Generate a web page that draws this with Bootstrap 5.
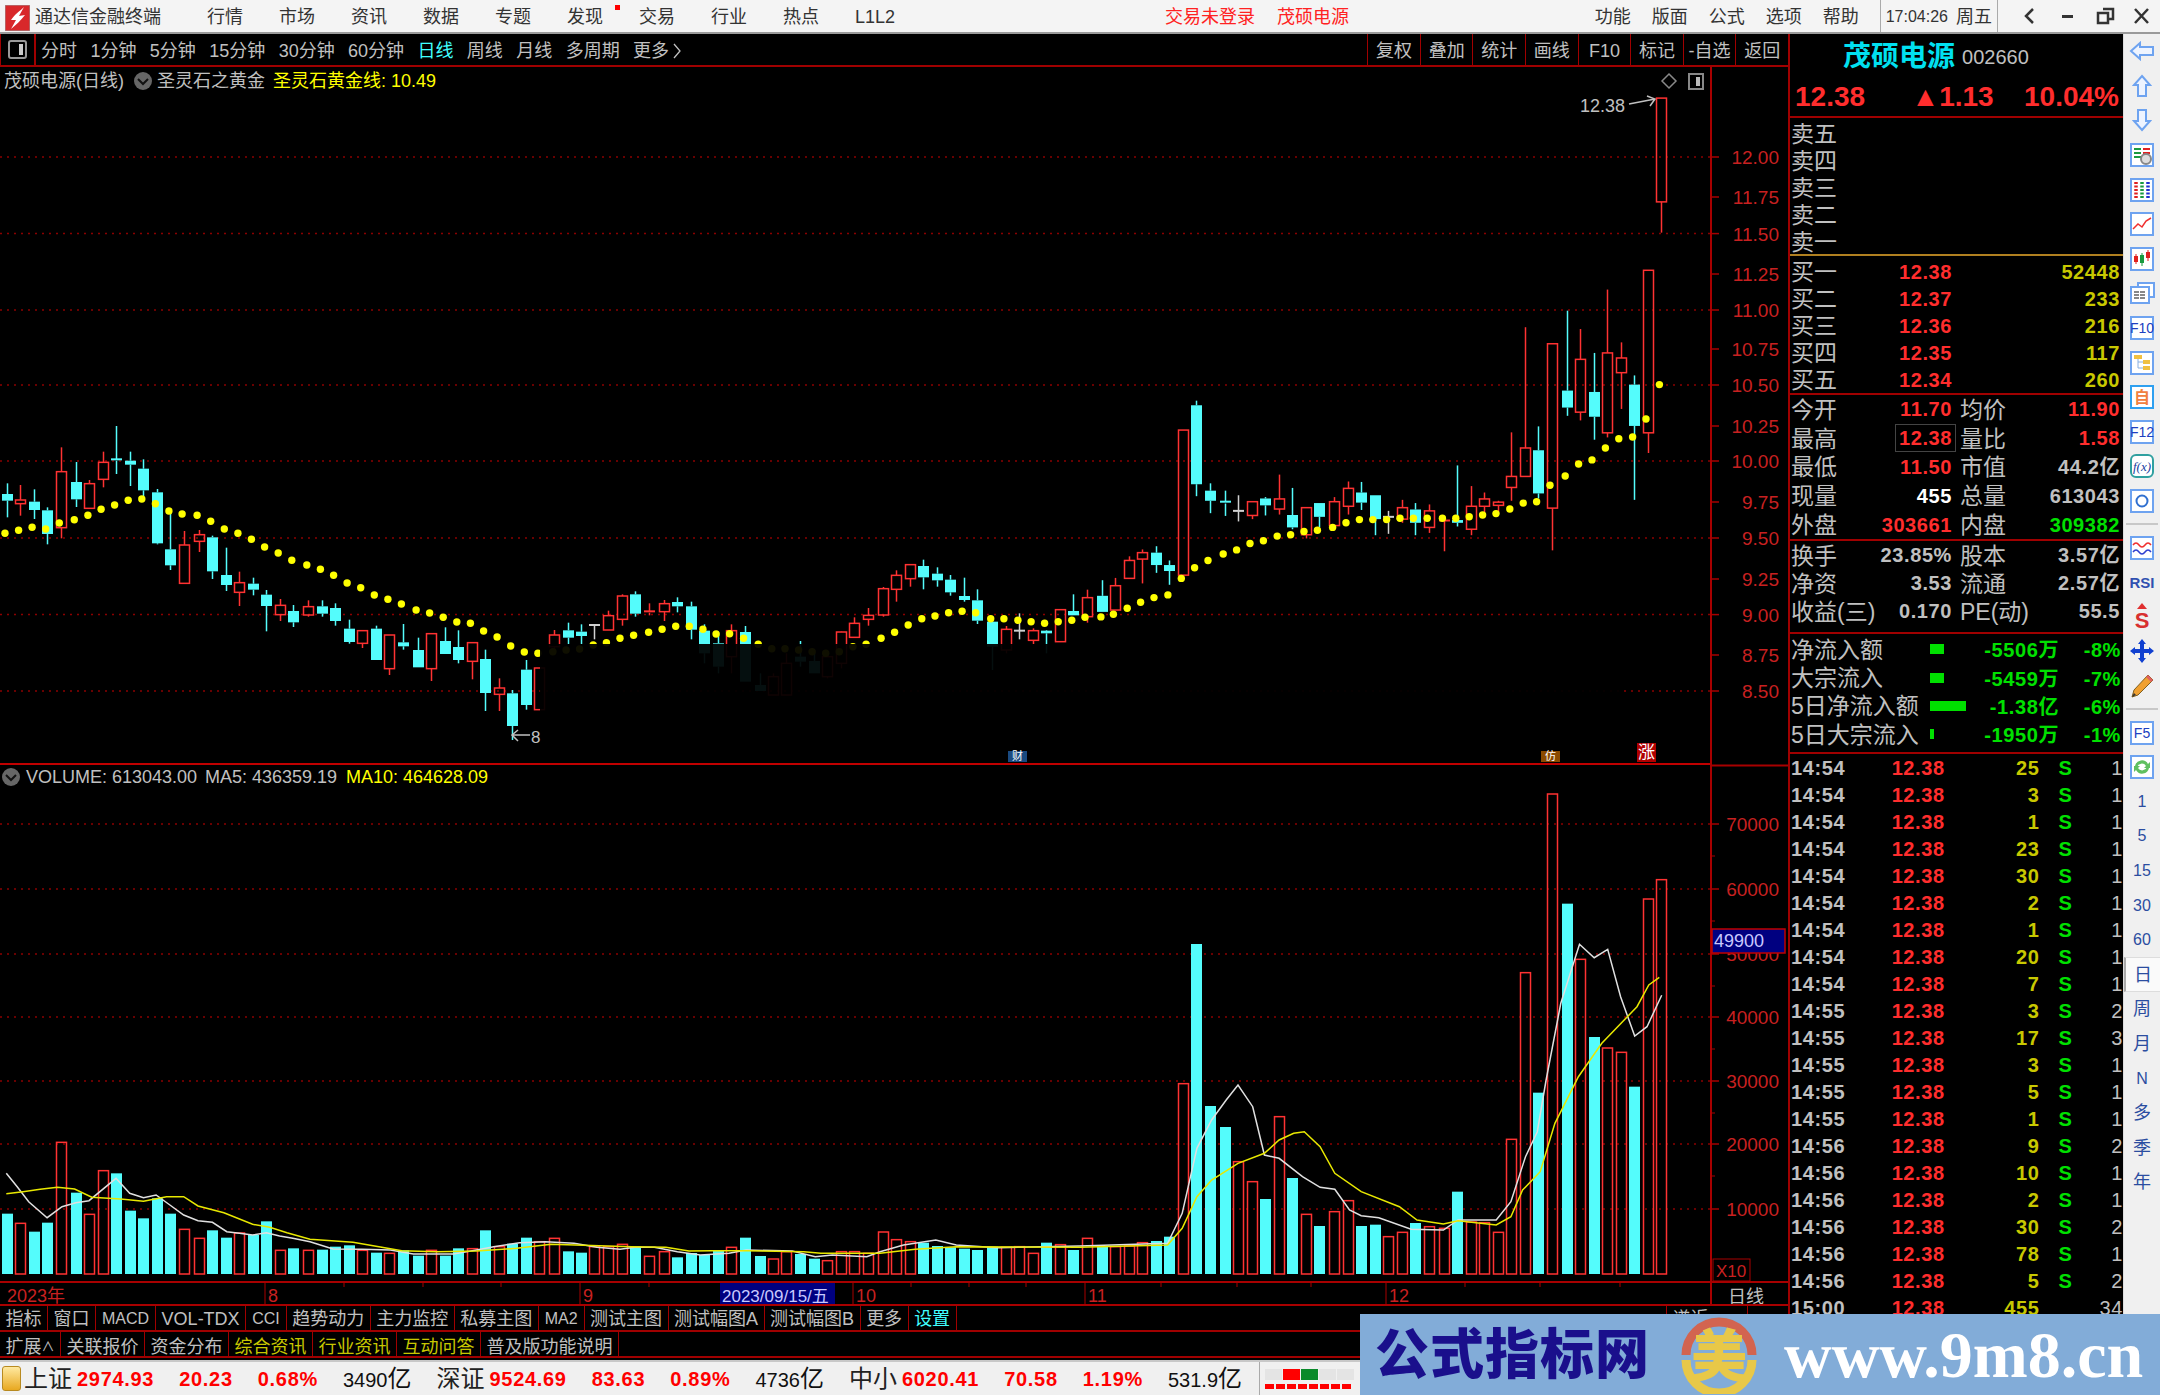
<!DOCTYPE html>
<html lang="zh-CN">
<head>
  <meta charset="UTF-8">
  <title>通达信金融终端</title>
  <link href="https://cdn.jsdelivr.net/npm/bootstrap@5.3.0/dist/css/bootstrap.min.css" rel="stylesheet">
  <style>
    body { width: 2160px; height: 1395px; overflow: hidden; background: #000; color: #c0c0c0;
      font-family: "Liberation Sans", "Noto Sans CJK SC", sans-serif; font-size: 18px; line-height: 1; position: relative; }
    /* title bar */
    .title-bar { height: 34px; background: #f4f4f4; border-bottom: 2px solid #9a9a9a; color: #333; }
    .title-bar > span { padding-top: 2px; }
    .title-logo { margin: 3px 5px 0 5px; }
    .menu-gap { width: 46px; }
    .menu-item { margin-right: 36px; position: relative; }
    .menu-dot { position: absolute; right: -17px; top: -1px; width: 5px; height: 5px; background: #f00; }
    .title-red { color: #f22; margin-right: 22px; }
    .title-red-first { margin-left: 234px; }
    .title-right { margin-left: auto; }
    .title-right span.tool { margin-right: 21px; padding-top: 2px; }
    .clock { border-left: 1px solid #aaa; border-right: 1px solid #aaa; height: 32px; padding: 2px 5px 0; font-size: 16px; margin-right: 14px; }
    .clock-day { font-size: 18px; }
    .win-btn { width: 37px; text-align: center; color: #333; }
    /* work area */
    .work-row { height: 1326px; }
    .left-col { width: 1788px; }
    .period-bar { height: 33px; border-bottom: 2px solid #a00000; }
    .period-ico { width: 36px; height: 31px; border-left: 1px solid #a00000; border-right: 2px solid #a00000; margin-right: 5px; }
    .period-item { margin-right: 13.4px; padding-top: 3px; }
    .period-on { color: #40ffff; }
    .period-tools { margin-left: auto; }
    .tool-cell { width: 52.6px; height: 31px; padding-top: 2px; border-left: 1px solid #a00000; }
    .chart-svg { display: block; width: 1788px; height: 1239px; }
    .chart-svg text { font-family: "Liberation Sans", "Noto Sans CJK SC", sans-serif; }
    .tab-row { height: 26px; border-bottom: 2px solid #a00000; }
    .tab-cell { height: 24px; padding: 2px 5.5px 0; border-right: 1px solid #a00000; white-space: nowrap; }
    .tab-row-low .tab-cell { padding-top: 5px; }
    .tab-small { font-size: 16px; padding: 2px 6px 0; }
    .tab-yellow { color: #c8c800; }
    .tab-cyan { color: #40ffff; }
    .tab-far { margin: 0 40px 0 auto; width: 82px; border-left: 1px solid #a00000; }
    .tab-caret { font-size: 13px; }
    /* quote panel */
    .quote-panel { width: 335px; border-left: 2px solid #a00000; padding-left: 1px; overflow: hidden; font-weight: 700; }
    .q-head { height: 41px; padding: 5px 0 0 52px; }
    .q-name { color: #00e0f0; font-size: 28px; margin-right: 7px; }
    .q-code { font-size: 20px; font-weight: 400; }
    .q-price { height: 43px; border-bottom: 2px solid #a00000; margin-left: -1px; padding: 2px 4px 0 5px; color: #ff2d2d; font-size: 28px; }
    .q-sec { margin-left: -1px; padding-left: 1px; border-bottom: 2px solid #a00000; }
    .q-sell { height: 138px; border-bottom-color: #b08020; padding-top: 1px; }
    .q-buy { height: 139px; padding-top: 2px; }
    .q-five { height: 146px; }
    .q-three { height: 93px; }
    .q-money { height: 120px; padding-top: 1px; }
    .q-row { height: 27px; }
    .q-five .q-row { height: 28.8px; }
    .q-three .q-row { height: 28px; }
    .q-money .q-row { height: 28.4px; }
    .q-cell { width: 161px; }
    .q-cell2 { width: 160px; margin-left: 8px; }
    .lbl { font-size: 23px; font-weight: 400; white-space: nowrap; padding-top: 2px; }
    .q-row.lbl { padding-top: 3px; }
    .num { font-size: 20px; letter-spacing: .6px; }
    .c-red { color: #ff2d2d; }
    .c-green { color: #00e000; }
    .c-olive { color: #c8c800; }
    .c-gray { color: #c0c0c0; }
    .c-white { color: #fff; }
    .boxed { outline: 1px solid #444; outline-offset: 3px; }
    .flow-lbl { width: 139px; }
    .flow-bar { width: 50px; }
    .flow-fill { height: 10px; background: #00e000; }
    .flow-val { width: 79px; padding-top: 2px; }
    .flow-pct { width: 62px; padding-top: 2px; }
    .trade-row { height: 27px; padding-top: 1px; }
    .tr-time { width: 55px; color: #c0c0c0; }
    .tr-price { width: 104px; }
    .tr-vol { width: 99px; }
    .tr-side { width: 30px; padding-left: 19px; box-sizing: content-box; }
    .tr-num { width: 27px; margin-left: 10px; color: #c0c0c0; font-weight: 400; }
    /* side toolbar */
    .side-bar { width: 37px; background: #f0f0f0; border-left: 1px solid #ddd; }
    .side-item { height: 34.6px; color: #2b4da0; font-size: 16px; }
    .side-cjk { font-size: 18px; }
    .side-rsi { font-size: 15px; color: #3050b0; }
    .side-on { background: #fafafa; border-left: 2px solid #aaa; border-top: 1px solid #ddd; border-bottom: 1px solid #ddd; }
    .side-sep { height: 2px; background: #c8c8c8; margin: 5px 2px; }
    /* status bar */
    .status-bar { height: 35px; background: #f0f0f0; color: #222; gap: 25px; border-top: 2px solid #c8c8c8; }
    .status-ico { width: 19px; height: 25px; margin: 0 -22px 0 2px; background: linear-gradient(#ffe9a0, #e8a820); border: 1px solid #b88a20; border-radius: 3px; }
    .status-name { font-size: 24px; margin-right: 5px; }
    .status-num { font-size: 20px; font-weight: 700; color: #f00; letter-spacing: .7px; }
    .status-amt { font-size: 20px; color: #111; }
    .status-amt i { font-style: normal; font-size: 24px; }
    .status-sep { border-left: 1px solid #aaa; height: 33px; margin-left: -8px; }
    .status-mini { margin-left: -20px; }
    .mini-cell { width: 17px; height: 11px; background: #e4e4e4; margin-right: 1px; }
    .mini-red { background: #f00; }
    .mini-green { background: #0a8a2a; }
    .mini-dash { width: 9px; height: 5px; margin-right: 2px; background: #f00; }
    /* watermark */
    .site-mark { position: absolute; left: 1360px; top: 1314px; width: 800px; height: 81px; background: #82acd8; }
    .site-title { font-size: 54px; font-weight: 900; color: #1a0f8c; margin-left: 15px; letter-spacing: 1px; white-space: nowrap; }
    .site-logo { margin: 0 26px 0 30px; }
    .site-url { font-family: "Liberation Serif", serif; font-weight: 700; font-size: 66px; color: #fff; white-space: nowrap; }
  </style>
</head>
<body>
  <header class="title-bar d-flex align-items-center">
    <svg class="title-logo" width="25" height="26" viewBox="0 0 25 26">
      <rect width="25" height="26" fill="#d8282a" stroke="#999"/>
      <path d="M19 2 C15 6 10 9 6 15 L11 15 L6 24 C11 20 16 15 20 10 L14 11Z" fill="#fff"/>
    </svg>
    <span>通达信金融终端</span>
    <span class="menu-gap"></span>
    <span class="menu-item">行情</span><span class="menu-item">市场</span><span class="menu-item">资讯</span><span class="menu-item">数据</span><span class="menu-item">专题</span>
    <span class="menu-item">发现<i class="menu-dot"></i></span><span class="menu-item">交易</span><span class="menu-item">行业</span><span class="menu-item">热点</span>
    <span class="menu-item">L1L2</span>
    <span class="title-red title-red-first">交易未登录</span><span class="title-red">茂硕电源</span>
    <div class="title-right d-flex align-items-center">
      <span class="tool">功能</span><span class="tool">版面</span><span class="tool">公式</span><span class="tool">选项</span><span class="tool">帮助</span>
      <span class="clock d-flex align-items-center gap-2">17:04:26 <span class="clock-day">周五</span></span>
      <svg class="win-btn" height="20" viewBox="0 0 37 20"><path d="M21 3 L14 10 L21 17" fill="none" stroke="#333" stroke-width="2.5"/></svg>
      <svg class="win-btn" height="20" viewBox="0 0 37 20"><rect x="13" y="9" width="11" height="3" fill="#333"/></svg>
      <svg class="win-btn" height="20" viewBox="0 0 37 20"><path d="M17 3 H27 V13 H23 M12 7 H22 V17 H12Z" fill="none" stroke="#333" stroke-width="2.5"/></svg>
      <svg class="win-btn" height="20" viewBox="0 0 37 20"><path d="M12 3 L25 17 M25 3 L12 17" stroke="#333" stroke-width="2.5"/></svg>
    </div>
  </header>

  <div class="work-row d-flex">
    <div class="left-col">
      <div class="period-bar d-flex align-items-center">
        <div class="period-ico d-flex align-items-center justify-content-center">
          <svg width="19" height="19" viewBox="0 0 19 19"><rect x="1" y="1" width="17" height="17" rx="2" fill="none" stroke="#999" stroke-width="2"/><rect x="11" y="4" width="4" height="11" fill="#ccc"/></svg>
        </div>
        <span class="period-item">分时</span><span class="period-item">1分钟</span><span class="period-item">5分钟</span><span class="period-item">15分钟</span><span class="period-item">30分钟</span><span class="period-item">60分钟</span>
        <span class="period-item period-on">日线</span><span class="period-item">周线</span><span class="period-item">月线</span><span class="period-item">多周期</span>
        <span class="period-item d-flex align-items-center gap-1">更多 <svg width="8" height="16" viewBox="0 0 8 16"><path d="M1 1 L7 8 L1 15" fill="none" stroke="#c0c0c0" stroke-width="1.3"/></svg></span>
        <div class="period-tools d-flex">
          <span class="tool-cell d-flex align-items-center justify-content-center">复权</span><span class="tool-cell d-flex align-items-center justify-content-center">叠加</span>
          <span class="tool-cell d-flex align-items-center justify-content-center">统计</span><span class="tool-cell d-flex align-items-center justify-content-center">画线</span>
          <span class="tool-cell d-flex align-items-center justify-content-center">F10</span><span class="tool-cell d-flex align-items-center justify-content-center">标记</span>
          <span class="tool-cell d-flex align-items-center justify-content-center">-自选</span><span class="tool-cell d-flex align-items-center justify-content-center">返回</span>
        </div>
      </div>

      <svg id="chart" class="chart-svg" viewBox="0 67 1788 1239"></svg>

      <div class="tab-row d-flex">
        <span class="tab-cell d-flex align-items-center">指标</span><span class="tab-cell d-flex align-items-center">窗口</span>
        <span class="tab-cell tab-small d-flex align-items-center">MACD</span><span class="tab-cell d-flex align-items-center">VOL-TDX</span>
        <span class="tab-cell tab-small d-flex align-items-center">CCI</span><span class="tab-cell d-flex align-items-center">趋势动力</span>
        <span class="tab-cell d-flex align-items-center">主力监控</span><span class="tab-cell d-flex align-items-center">私募主图</span>
        <span class="tab-cell tab-small d-flex align-items-center">MA2</span><span class="tab-cell d-flex align-items-center">测试主图</span>
        <span class="tab-cell d-flex align-items-center">测试幅图A</span><span class="tab-cell d-flex align-items-center">测试幅图B</span>
        <span class="tab-cell d-flex align-items-center">更多</span><span class="tab-cell tab-cyan d-flex align-items-center">设置</span>
        <span class="tab-cell tab-far d-flex align-items-center">谱近</span>
      </div>
      <div class="tab-row tab-row-low d-flex">
        <span class="tab-cell d-flex align-items-center">扩展<span class="tab-caret">∧</span></span><span class="tab-cell d-flex align-items-center">关联报价</span>
        <span class="tab-cell d-flex align-items-center">资金分布</span><span class="tab-cell tab-yellow d-flex align-items-center">综合资讯</span>
        <span class="tab-cell tab-yellow d-flex align-items-center">行业资讯</span><span class="tab-cell tab-yellow d-flex align-items-center">互动问答</span>
        <span class="tab-cell d-flex align-items-center">普及版功能说明</span>
      </div>
    </div>

    <aside class="quote-panel">
      <div class="q-head d-flex align-items-center"><span class="q-name">茂硕电源</span><span class="q-code">002660</span></div>
      <div class="q-price d-flex align-items-center justify-content-between"><span>12.38</span><span class="ms-3">▲1.13</span><span>10.04%</span></div>

      <div class="q-sec q-sell">
        <div class="q-row lbl d-flex align-items-center">卖五</div><div class="q-row lbl d-flex align-items-center">卖四</div><div class="q-row lbl d-flex align-items-center">卖三</div><div class="q-row lbl d-flex align-items-center">卖二</div><div class="q-row lbl d-flex align-items-center">卖一</div>
      </div>
      <div class="q-sec q-buy" id="buyRows"></div>
      <div class="q-sec q-five">
        <div class="q-row d-flex align-items-center"><div class="q-cell d-flex justify-content-between align-items-center"><span class="lbl">今开</span><span class="num c-red">11.70</span></div><div class="q-cell2 d-flex justify-content-between align-items-center"><span class="lbl">均价</span><span class="num c-red">11.90</span></div></div>
        <div class="q-row d-flex align-items-center"><div class="q-cell d-flex justify-content-between align-items-center"><span class="lbl">最高</span><span class="num c-red boxed">12.38</span></div><div class="q-cell2 d-flex justify-content-between align-items-center"><span class="lbl">量比</span><span class="num c-red">1.58</span></div></div>
        <div class="q-row d-flex align-items-center"><div class="q-cell d-flex justify-content-between align-items-center"><span class="lbl">最低</span><span class="num c-red">11.50</span></div><div class="q-cell2 d-flex justify-content-between align-items-center"><span class="lbl">市值</span><span class="num c-gray">44.2亿</span></div></div>
        <div class="q-row d-flex align-items-center"><div class="q-cell d-flex justify-content-between align-items-center"><span class="lbl">现量</span><span class="num c-white">455</span></div><div class="q-cell2 d-flex justify-content-between align-items-center"><span class="lbl">总量</span><span class="num c-gray">613043</span></div></div>
        <div class="q-row d-flex align-items-center"><div class="q-cell d-flex justify-content-between align-items-center"><span class="lbl">外盘</span><span class="num c-red">303661</span></div><div class="q-cell2 d-flex justify-content-between align-items-center"><span class="lbl">内盘</span><span class="num c-green">309382</span></div></div>
      </div>
      <div class="q-sec q-three">
        <div class="q-row d-flex align-items-center"><div class="q-cell d-flex justify-content-between align-items-center"><span class="lbl">换手</span><span class="num c-gray">23.85%</span></div><div class="q-cell2 d-flex justify-content-between align-items-center"><span class="lbl">股本</span><span class="num c-gray">3.57亿</span></div></div>
        <div class="q-row d-flex align-items-center"><div class="q-cell d-flex justify-content-between align-items-center"><span class="lbl">净资</span><span class="num c-gray">3.53</span></div><div class="q-cell2 d-flex justify-content-between align-items-center"><span class="lbl">流通</span><span class="num c-gray">2.57亿</span></div></div>
        <div class="q-row d-flex align-items-center"><div class="q-cell d-flex justify-content-between align-items-center"><span class="lbl">收益(三)</span><span class="num c-gray">0.170</span></div><div class="q-cell2 d-flex justify-content-between align-items-center"><span class="lbl">PE(动)</span><span class="num c-gray">55.5</span></div></div>
      </div>
      <div class="q-sec q-money" id="flowRows"></div>
      <div id="tradeRows"></div>
    </aside>

    <nav class="side-bar d-flex flex-column align-items-center">
      <div class="side-item d-flex align-items-center"><svg width="26" height="20" viewBox="0 0 26 20"><path d="M2 10 L11 2 V6 H24 V14 H11 V18Z" fill="#eef4ff" stroke="#6ea3f0" stroke-width="2"/></svg></div>
      <div class="side-item d-flex align-items-center"><svg width="20" height="24" viewBox="0 0 20 24"><path d="M10 2 L18 11 H14 V22 H6 V11 H2Z" fill="#eef4ff" stroke="#6ea3f0" stroke-width="2"/></svg></div>
      <div class="side-item d-flex align-items-center"><svg width="20" height="24" viewBox="0 0 20 24"><path d="M10 22 L18 13 H14 V2 H6 V13 H2Z" fill="#eef4ff" stroke="#6ea3f0" stroke-width="2"/></svg></div>
      <div class="side-item d-flex align-items-center"><svg width="24" height="24" viewBox="0 0 24 24"><rect x="1" y="1" width="22" height="22" fill="#fff" stroke="#6ea3f0" stroke-width="2"/><path d="M4 6h7M4 10h7M4 14h7" stroke="#1a9a40" stroke-width="2"/><path d="M13 6h7M13 10h7" stroke="#e02020" stroke-width="2"/><circle cx="16" cy="16" r="5" fill="#ddd" stroke="#888" stroke-width="2"/></svg></div>
      <div class="side-item d-flex align-items-center"><svg width="24" height="24" viewBox="0 0 24 24"><rect x="1" y="1" width="22" height="22" fill="#fff" stroke="#6ea3f0" stroke-width="2"/><g stroke-width="3.5" stroke-dasharray="2 1.5"><path d="M6 4v16" stroke="#e02020"/><path d="M12 4v16" stroke="#1a9a40"/><path d="M18 4v16" stroke="#2030d0"/></g></svg></div>
      <div class="side-item d-flex align-items-center"><svg width="24" height="24" viewBox="0 0 24 24"><rect x="1" y="1" width="22" height="22" fill="#fff" stroke="#6ea3f0" stroke-width="2"/><path d="M3 17 L8 12 L12 15 L16 9 L21 6" fill="none" stroke="#f03030" stroke-width="1.5"/></svg></div>
      <div class="side-item d-flex align-items-center"><svg width="24" height="24" viewBox="0 0 24 24"><rect x="1" y="1" width="22" height="22" fill="#fff" stroke="#6ea3f0" stroke-width="2"/><path d="M6 7v10" stroke="#e02020"/><rect x="4" y="9" width="4" height="6" fill="#e02020"/><path d="M12 6v13" stroke="#1a9a40"/><rect x="10" y="8" width="4" height="8" fill="#1a9a40"/><path d="M18 3v11" stroke="#e02020"/><rect x="16" y="5" width="4" height="6" fill="#e02020"/></svg></div>
      <div class="side-item d-flex align-items-center"><svg width="25" height="23" viewBox="0 0 25 23"><path d="M8 4V1H24V15H19" fill="#fff" stroke="#6ea3f0" stroke-width="2"/><rect x="1" y="5" width="18" height="16" fill="#fff" stroke="#6ea3f0" stroke-width="2"/><path d="M4 10h12M4 13h12M4 16h12" stroke="#888" stroke-width="2" stroke-dasharray="5 1"/></svg></div>
      <div class="side-item d-flex align-items-center"><svg width="24" height="24" viewBox="0 0 24 24"><rect x="1" y="1" width="22" height="22" fill="#fff" stroke="#6ea3f0" stroke-width="2"/><text x="12" y="17" font-size="14" fill="#2040c0" text-anchor="middle" font-family="Liberation Sans">F10</text></svg></div>
      <div class="side-item d-flex align-items-center"><svg width="24" height="24" viewBox="0 0 24 24"><rect x="1" y="1" width="22" height="22" fill="#fff" stroke="#6ea3f0" stroke-width="2"/><path d="M8 6v11h5M8 11h5" fill="none" stroke="#8ab0e0"/><rect x="4" y="4" width="8" height="4" fill="#f0c040"/><rect x="13" y="9" width="7" height="4" fill="#f0c040"/><rect x="13" y="15" width="7" height="4" fill="#f0c040"/></svg></div>
      <div class="side-item d-flex align-items-center"><svg width="24" height="24" viewBox="0 0 24 24"><rect x="1" y="1" width="22" height="22" fill="#fff" stroke="#2ea0f0" stroke-width="2"/><text x="12" y="18" font-size="16" font-weight="700" fill="#f08040" text-anchor="middle" font-family="Noto Sans CJK SC">自</text></svg></div>
      <div class="side-item d-flex align-items-center"><svg width="24" height="24" viewBox="0 0 24 24"><rect x="1" y="1" width="22" height="22" fill="#fff" stroke="#6ea3f0" stroke-width="2"/><text x="12" y="17" font-size="14" fill="#2040c0" text-anchor="middle" font-family="Liberation Sans">F12</text></svg></div>
      <div class="side-item d-flex align-items-center"><svg width="24" height="24" viewBox="0 0 24 24"><rect x="1" y="1" width="22" height="22" rx="5" fill="#fff" stroke="#30a0a0" stroke-width="2"/><text x="12" y="17" font-size="13" font-style="italic" fill="#2040a0" text-anchor="middle" font-family="Liberation Serif">f(x)</text></svg></div>
      <div class="side-item d-flex align-items-center"><svg width="24" height="24" viewBox="0 0 24 24"><rect x="1" y="1" width="22" height="22" fill="#fff" stroke="#6ea3f0" stroke-width="2"/><circle cx="12" cy="12" r="5.5" fill="none" stroke="#3070d0" stroke-width="2"/></svg></div>
      <div class="side-sep align-self-stretch"></div>
      <div class="side-item d-flex align-items-center"><svg width="24" height="24" viewBox="0 0 24 24"><rect x="1" y="1" width="22" height="22" fill="#fff" stroke="#6ea3f0" stroke-width="2"/><path d="M3 9 Q6 5 9 9 T15 9 T21 9" fill="none" stroke="#f03030" stroke-width="1.5"/><path d="M3 16 Q6 12 9 16 T15 16 T21 16" fill="none" stroke="#3040d0" stroke-width="1.5"/></svg></div>
      <div class="side-item d-flex align-items-center"><b class="side-rsi">RSI</b></div>
      <div class="side-item d-flex align-items-center"><svg width="24" height="28" viewBox="0 0 24 28"><path d="M12 0 L17 6 H7Z" fill="#e03030"/><text x="12" y="25" font-size="22" font-weight="700" fill="#d83030" text-anchor="middle" font-family="Liberation Sans">S</text></svg></div>
      <div class="side-item d-flex align-items-center"><svg width="24" height="24" viewBox="0 0 24 24"><path d="M12 0 L16 5 H14 V10 H19 V8 L24 12 L19 16 V14 H14 V19 H16 L12 24 L8 19 H10 V14 H5 V16 L0 12 L5 8 V10 H10 V5 H8Z" fill="#1040d0"/></svg></div>
      <div class="side-item d-flex align-items-center"><svg width="26" height="26" viewBox="0 0 26 26"><path d="M19 2 L24 7 L9 22 L3 24 L5 17Z" fill="#f0a030" stroke="#806020"/><path d="M19 2 L24 7 L22 9 L17 4Z" fill="#e06060"/><path d="M3 24 L5 20 L7 22Z" fill="#333"/></svg></div>
      <div class="side-sep align-self-stretch"></div>
      <div class="side-item d-flex align-items-center"><svg width="24" height="24" viewBox="0 0 24 24"><rect x="1" y="1" width="22" height="22" fill="#fff" stroke="#6ea3f0" stroke-width="2"/><text x="12" y="17" font-size="14" fill="#2040c0" text-anchor="middle" font-family="Liberation Sans">F5</text></svg></div>
      <div class="side-item d-flex align-items-center"><svg width="24" height="24" viewBox="0 0 24 24"><rect x="1" y="1" width="22" height="22" fill="#fff" stroke="#6ea3f0" stroke-width="2"/><path d="M5 11 A7 7 0 0 1 18 9 L20 7 V13 H14 L16 11 A5 5 0 0 0 7 12Z" fill="#60c060"/><path d="M19 13 A7 7 0 0 1 6 15 L4 17 V11 H10 L8 13 A5 5 0 0 0 17 12Z" fill="#60c060"/></svg></div>
      <div class="side-item d-flex align-items-center">1</div>
      <div class="side-item d-flex align-items-center">5</div>
      <div class="side-item d-flex align-items-center">15</div>
      <div class="side-item d-flex align-items-center">30</div>
      <div class="side-item d-flex align-items-center">60</div>
      <div class="side-item side-cjk side-on d-flex align-items-center justify-content-center align-self-stretch">日</div>
      <div class="side-item side-cjk d-flex align-items-center">周</div>
      <div class="side-item side-cjk d-flex align-items-center">月</div>
      <div class="side-item d-flex align-items-center">N</div>
      <div class="side-item side-cjk d-flex align-items-center">多</div>
      <div class="side-item side-cjk d-flex align-items-center">季</div>
      <div class="side-item side-cjk d-flex align-items-center">年</div>
    </nav>
  </div>

  <footer class="status-bar d-flex align-items-center">
    <span class="status-ico"></span>
    <span class="d-flex align-items-center"><span class="status-name">上证</span><span class="status-num">2974.93</span></span>
    <span class="status-num">20.23</span><span class="status-num">0.68%</span><span class="status-amt">3490<i>亿</i></span>
    <span class="d-flex align-items-center"><span class="status-name">深证</span><span class="status-num">9524.69</span></span>
    <span class="status-num">83.63</span><span class="status-num">0.89%</span><span class="status-amt">4736<i>亿</i></span>
    <span class="d-flex align-items-center"><span class="status-name">中小</span><span class="status-num">6020.41</span></span>
    <span class="status-num">70.58</span><span class="status-num">1.19%</span><span class="status-amt">531.9<i>亿</i></span>
    <span class="status-sep"></span>
    <span class="status-mini d-flex flex-column gap-1">
      <span class="d-flex"><i class="mini-cell"></i><i class="mini-cell mini-red"></i><i class="mini-cell mini-green"></i><i class="mini-cell"></i><i class="mini-cell"></i></span>
      <span class="d-flex"><i class="mini-dash"></i><i class="mini-dash"></i><i class="mini-dash"></i><i class="mini-dash"></i><i class="mini-dash"></i><i class="mini-dash"></i><i class="mini-dash"></i><i class="mini-dash"></i></span>
    </span>
  </footer>

  <div class="site-mark d-flex align-items-center">
    <span class="site-title">公式指标网</span>
    <svg class="site-logo" width="78" height="78" viewBox="0 0 78 78">
      <path d="M6 39 A33 33 0 0 1 72 39" fill="none" stroke="#d26450" stroke-width="9"/>
      <path d="M6 44 A33 33 0 0 0 72 44" fill="none" stroke="#e8c848" stroke-width="9"/>
      <text x="39" y="60" font-size="56" font-weight="900" fill="#e8c848" text-anchor="middle" font-family="Noto Sans CJK SC">美</text>
    </svg>
    <span class="site-url">www.9m8.cn</span>
  </div>

  <script>
    // candles read off the chart: [x, high, bodyTop, bodyBottom, low]
    var segA = [[19,250,282,302,352],[57,255,300,311,347],[94,268,305,330,357],[132,322,331,402,433],[170,142,215,383,415],[212,186,246,298,321],[250,240,251,325,325],[288,155,187,238,262],[325,78,178,182,222],[363,155,182,194,258],[401,178,206,271,290],[439,267,277,430,433],[477,330,448,496,510],[514,393,435,550,550],[556,390,404,424,456],[594,407,412,514,537],[632,443,525,555,573],[670,515,548,577,618],[708,533,551,569,586],[746,570,584,618,694],[783,597,616,644,663],[821,615,633,667,681],[863,601,620,645,650],[901,601,619,641,650],[939,610,624,663,677],[976,659,686,726,731],[1014,691,692,730,744],[1052,677,686,780,780],[1090,705,705,806,825],[1128,672,727,739,749],[1169,713,750,802,802],[1207,701,701,806,843],[1245,682,723,762,762],[1283,691,741,780,790],[1321,728,728,784,838],[1358,749,777,879,933],[1396,835,864,883,933],[1434,870,880,978,1020],[1472,780,809,915,929],[1510,804,804,929,929]];
    var segB = [[39,750,765,800,820],[77,728,751,773,792],[115,733,755,768,792],[152,733,735,735,778],[191,692,707,750,750],[229,643,648,718,737],[267,634,643,701,710],[304,670,694,698,706],[346,660,671,695,723],[384,652,666,679,697],[422,665,679,749,778],[459,733,752,820,850],[497,760,790,860,880],[535,733,752,830,880],[573,738,756,905,905],[615,880,915,933,933],[652,880,890,945,945],[690,820,850,945,945],[728,783,830,845,860],[766,810,843,880,880],[804,820,830,890,895],[842,755,756,850,865],[880,712,730,772,772],[918,684,706,718,737],[960,621,626,705,710],[998,571,586,628,665],[1035,553,554,596,620],[1073,539,558,592,628],[1111,562,581,601,620],[1149,585,599,637,647],[1186,593,648,660,665],[1224,628,661,722,732],[1266,725,725,800,870],[1304,738,748,810,820],[1342,700,752,752,778],[1380,745,752,781,792],[1417,750,752,760,820],[1455,688,689,785,785],[1493,643,693,706,706],[1531,629,653,710,728]];
    var segC = [[4,1133,1167,1202,1202],[34,1128,1145,1198,1198],[64,1081,1090,1129,1129],[94,1066,1073,1087,1140],[125,1059,1073,1100,1117],[155,1090,1100,1113,1143],[185,806,806,1122,1122],[215,742,752,924,950],[246,922,938,960,987],[280,938,962,966,993],[309,948,982,982,1005],[340,962,962,992,1000],[370,952,955,970,992],[400,903,956,978,990],[431,932,991,1018,1022],[461,975,975,1034,1042],[491,965,965,995,1018],[525,952,962,1014,1018],[555,918,933,972,990],[585,919,942,964,980],[615,948,948,1000,1035],[646,982,995,995,1032],[676,958,975,1000,1008],[706,965,979,1008,1035],[737,968,982,1018,1030],[770,1003,1003,1003,1070],[800,883,1002,1008,1016],[830,928,972,1022,1035],[860,942,956,972,985],[891,960,963,970,985],[921,811,907,931,960],[952,582,845,907,907],[982,798,850,944,955],[1012,618,618,976,1068],[1046,546,720,757,775],[1076,586,652,767,785],[1106,638,723,777,827],[1136,500,638,812,822],[1166,615,649,681,760],[1197,687,707,797,958],[1227,458,458,812,856],[1257,83,83,309,376]];
    var redDays = [2,5,7,8,14,15,18,21,23,27,29,32,35,37,40,41,45,46,48,49,54,57,58,61,62,63,64,65,66,67,74,76,78,80,82,83,84,87,92,94,96,98,99,103,105,106,108,109,110,111,112,114,116,118,119,121,122];
    var whiteDays = [44,75,91,102];

    var kinds = [];
    for (var d = 1; d <= 122; d++) kinds.push(redDays.indexOf(d) >= 0 ? "r" : whiteDays.indexOf(d) >= 0 ? "w" : "c");

    function scale(seg, x0, sx, y0, sy) {
      return seg.map(function (c) {
        return [x0 + c[0] / sx, y0 + c[1] / sy, y0 + c[2] / sy, y0 + c[3] / sy, y0 + c[4] / sy];
      });
    }
    var candles = scale(segA, 0, 2.8, 400, 3).concat(scale(segB, 540, 2.8, 380, 3), scale(segC, 1100, 2.24, 60, 2.178));

    var dotsA = [[14,400],[52,391],[90,382],[128,387],[166,369],[208,359],[246,346],[283,328],[321,315],[359,301],[397,297],[435,311],[473,333],[510,342],[552,346],[590,364],[628,387],[666,400],[704,418],[741,441],[779,459],[817,481],[859,495],[897,508],[934,526],[972,549],[1010,563],[1048,585],[1086,598],[1124,612],[1165,630],[1203,639],[1241,652],[1279,666],[1317,670],[1354,693],[1392,711],[1430,738],[1468,756],[1506,760]];
    var dotsB = [[36,815],[73,810],[111,807],[149,795],[186,788],[224,775],[262,766],[304,757],[342,748],[380,739],[418,739],[456,748],[493,762],[531,761],[570,775],[611,793],[649,806],[686,806],[724,810],[762,815],[800,820],[838,815],[876,800],[913,793],[955,775],[993,757],[1031,735],[1069,716],[1106,708],[1144,698],[1182,694],[1220,698],[1262,716],[1299,716],[1338,721],[1375,725],[1413,730],[1451,725],[1489,721],[1526,712]];
    var dotsC = [[2,1213],[30,1207],[61,1194],[91,1181],[121,1171],[152,1165],[182,1129],[212,1106],[242,1090],[276,1076],[306,1067],[336,1053],[366,1047],[397,1037],[427,1034],[457,1027],[487,1024],[521,1018],[551,1008],[581,1001],[611,1001],[642,1001],[672,998],[702,998],[733,998],[767,998],[797,998],[827,995],[857,991],[887,988],[918,978],[948,965],[978,962],[1008,926],[1042,906],[1072,880],[1102,871],[1132,845],[1162,825],[1193,821],[1223,782],[1253,707]];

    function pts(list, x0, sx, y0, sy) {
      return list.map(function (p) { return [x0 + p[0] / sx, y0 + p[1] / sy]; });
    }
    var dots = pts(dotsA, 0, 2.8, 400, 3).concat(pts(dotsB, 540, 2.8, 380, 3), pts(dotsC, 1100, 2.24, 60, 2.178));

    // volume bar tops
    var volA = [491,520,545,518,277,428,493,362,370,482,505,445,491,538,565,541,563,549,555,514,601,595,601,599,590,586,601,608,610,601,617,601,617,595,596,541,590,581,563,575,565,604,608,590,590,583,590,619,605,622,609,615,603,592,563,618,627,605,612,626,632,605,605,610,546,569];
    var volB = [1415,1418,1428,1432,1436,1440,1430,1432,1430,1450,1418,1424,1440,1405,1430,1430,1428,1418,1413,1400,941,522,1008,1071,1175,1235,1287,1040,1224,1333,1368,1325,1292,1368,1364,1400,1387,1359,1370,1375,1265,1356,1358,1387,1108,608,968,72,401,568,801,834,847,950,387,329];
    var volTops = volA.map(function (z) { return 1050 + z / 3; }).concat(volB.map(function (z) { return 770 + z / 3; }));

    var ma5 = pts([[11,370],[30,410],[50,455],[82,503],[108,470],[132,458],[155,452],[202,385],[226,430],[250,443],[272,435],[296,465],[320,495],[345,512],[370,517],[395,545],[417,550],[440,555],[464,548],[487,558],[510,565],[540,575],[580,597],[630,598],[680,600],[720,612],[790,612],[830,600],[860,590],[905,578],[950,575],[1000,580],[1040,592],[1080,598],[1106,592],[1140,592],[1180,605],[1220,615],[1270,610],[1300,600],[1380,603],[1420,620],[1450,615],[1510,620]], 0, 1.742, 1050, 3)
      .concat(pts([[0,1445],[40,1425],[95,1410],[130,1425],[200,1433],[340,1428],[490,1420],[515,1330],[540,1135],[565,1050],[590,990],[610,945],[635,1010],[655,1155],[680,1165],[720,1220],[750,1252],[775,1258],[800,1320],[820,1337],[850,1343],[905,1378],[960,1380],[985,1350],[1050,1350],[1075,1295],[1100,1160],[1120,1085],[1135,930],[1160,700],[1192,523],[1217,563],[1240,538],[1262,680],[1286,798],[1307,770],[1332,676]], 880, 1.704, 770, 3));
    var ma10 = pts([[11,431],[40,425],[70,418],[100,412],[130,417],[160,442],[210,447],[250,454],[290,440],[320,440],[345,468],[390,488],[440,523],[470,532],[500,548],[540,568],[615,577],[660,590],[700,602],[760,605],[830,603],[900,595],[960,583],[1100,590],[1160,592],[1200,603],[1240,602],[1300,602],[1400,605],[1430,610],[1530,610]], 0, 1.742, 1050, 3)
      .concat(pts([[0,1450],[60,1438],[130,1430],[340,1432],[490,1425],[515,1375],[540,1280],[565,1230],[610,1180],[655,1150],[680,1110],[705,1090],[723,1085],[750,1130],[775,1210],[820,1265],[885,1310],[915,1350],[960,1362],[985,1352],[1050,1365],[1075,1340],[1095,1260],[1125,1205],[1150,1060],[1190,920],[1230,820],[1290,710],[1310,645],[1328,622]], 880, 1.704, 770, 3));

    var RED = "#ff3232", CYAN = "#54fcfc", WHITE = "#d0d0d0", LINE = "#a80000", AXIS = "#c82020";
    var out = [];
    function line(x1, y1, x2, y2, col, w, dash) {
      out.push('<line x1="' + x1 + '" y1="' + y1 + '" x2="' + x2 + '" y2="' + y2 + '" stroke="' + col + '" stroke-width="' + (w || 1) + '"' + (dash ? ' stroke-dasharray="' + dash + '"' : "") + "/>");
    }
    function rect(x, y, w, h, fill, stroke, sw) {
      out.push('<rect x="' + x + '" y="' + y + '" width="' + w + '" height="' + h + '" fill="' + fill + '"' + (stroke ? ' stroke="' + stroke + '" stroke-width="' + (sw || 1) + '"' : "") + "/>");
    }
    function text(x, y, str, col, size, anchor) {
      out.push('<text x="' + x + '" y="' + y + '" fill="' + col + '" font-size="' + (size || 18) + '" text-anchor="' + (anchor || "start") + '" dominant-baseline="central">' + str + "</text>");
    }
    function poly(list, col, w) {
      out.push('<polyline points="' + list.map(function (p) { return p[0].toFixed(1) + "," + p[1].toFixed(1); }).join(" ") + '" fill="none" stroke="' + col + '" stroke-width="' + w + '"/>');
    }
    function pill(x, y) {
      out.push('<circle cx="' + x + '" cy="' + y + '" r="9" fill="#666"/><path d="M' + (x - 5) + " " + (y - 2) + " L" + x + " " + (y + 3) + " L" + (x + 5) + " " + (y - 2) + '" fill="none" stroke="#111" stroke-width="2"/>');
    }

    // price grid and axis
    [157, 233.6, 310, 385, 461, 538, 614.6, 691].forEach(function (y) {
      line(0, y, 1711, y, "#8b0000", 1.5, "2 5");
    });
    [["12.00",157],["11.75",197],["11.50",233.6],["11.25",274],["11.00",310],["10.75",349],["10.50",385],["10.25",426],["10.00",461],["9.75",502],["9.50",538],["9.25",579],["9.00",614.6],["8.75",655],["8.50",691]].forEach(function (l) {
      line(1711, l[1], 1719, l[1], LINE, 1.5);
      text(1779, l[1] + 0.5, l[0], AXIS, 19, "end");
    });

    // candles
    candles.forEach(function (c, i) {
      var k = kinds[i], x = Math.round(c[0]) + 0.5, col = k === "r" ? RED : k === "c" ? CYAN : WHITE;
      line(x, c[1], x, c[2], col, 1.5);
      line(x, c[3], x, c[4], col, 1.5);
      if (c[3] - c[2] < 2) line(x - 5.5, c[2], x + 5.5, c[2], col, 2);
      else if (k === "r") rect(x - 5, c[2], 10, c[3] - c[2], "none", col, 1.5);
      else rect(x - 5.5, c[2], 11, c[3] - c[2], col);
    });
    dots.forEach(function (p) {
      out.push('<circle cx="' + p[0].toFixed(1) + '" cy="' + p[1].toFixed(1) + '" r="3.7" fill="#ff0"/>');
    });
    // blanked band over the middle of the price pane
    rect(540, 644, 1081, 101, "rgba(0,0,0,.94)");

    // price pane overlays
    text(4, 81, "茂硕电源(日线)", "#c0c0c0");
    pill(143, 81);
    text(157, 81, "圣灵石之黄金", "#c0c0c0");
    text(273, 81, "圣灵石黄金线: 10.49", "#ff0");
    text(1580, 106, "12.38", "#c0c0c0", 18);
    out.push('<path d="M1629 104 L1655 99 M1647 96 L1655 99 L1650 106" fill="none" stroke="#c0c0c0" stroke-width="1.5"/>');
    out.push('<path d="M1669 74 L1676 81 L1669 88 L1662 81Z" fill="none" stroke="#888" stroke-width="1.5"/>');
    rect(1689, 74, 14, 15, "none", "#888", 2);
    rect(1696, 77, 4, 9, "#bbb");
    out.push('<path d="M530 735 H512 M518 730 L512 735 L518 741" fill="none" stroke="#c0c0c0" stroke-width="1.5"/>');
    text(531, 737, "8", "#c0c0c0", 17);
    rect(1008, 751, 19, 11, "#1a4a80");
    text(1017.5, 756, "财", "#fff", 11, "middle");
    rect(1541, 751, 19, 11, "#8a4a00");
    text(1550.5, 756, "仿", "#fff", 11, "middle");
    rect(1637, 743, 19, 19, "#b00000");
    text(1646.5, 752, "涨", "#fff", 17, "middle");

    // pane divider and axis line
    line(0, 764, 1711, 764, "#c00000", 2);
    line(1711, 765.5, 1788, 765.5, LINE, 2);
    line(1711, 67, 1711, 1305, LINE, 2);

    // volume pane
    pill(11, 777);
    text(26, 777, "VOLUME: 613043.00", "#c0c0c0", 18);
    text(205, 777, "MA5: 436359.19", "#c0c0c0", 18);
    text(346, 777, "MA10: 464628.09", "#ff0", 18);
    [["70000",824],["60000",889],["50000",954],["40000",1017],["30000",1081],["20000",1144],["10000",1209]].forEach(function (l, i) {
      line(0, l[1], 1711, l[1], "#8b0000", 1.5, "2 5");
      line(1711, l[1], 1719, l[1], LINE, 1.5);
      if (i < 6) line(1711, l[1] + 32, 1715, l[1] + 32, LINE, 1);
      text(1779, l[1] + 0.5, l[0], AXIS, 19, "end");
    });
    candles.forEach(function (c, i) {
      var x = Math.round(c[0]), top = volTops[i];
      if (kinds[i] === "c") rect(x - 5, top, 11, 1274 - top, CYAN);
      else rect(x - 4.5, top, 10, 1274 - top, "none", RED, 1.5);
    });
    poly(ma5, "#e0e0e0", 1.5);
    poly(ma10, "#e8e800", 1.5);
    rect(1712, 929, 73, 24, "#000080", "#c00000", 1.5);
    text(1714, 941, "49900", "#c8c8ff", 18);
    rect(1713, 1259, 37, 22, "#000", LINE, 1);
    text(1716, 1271, "X10", AXIS, 17);

    // date axis
    line(0, 1282, 1788, 1282, LINE, 2);
    text(7, 1296, "2023年", AXIS, 18);
    [[265, "8"], [580, "9"], [853, "10"], [1085, "11"], [1386, "12"]].forEach(function (a) {
      line(a[0], 1283, a[0], 1305, LINE, 1);
      text(a[0] + 3, 1296, a[1], AXIS, 18);
    });
    [344, 423, 501, 649, 911, 969, 1026, 1161, 1237, 1311, 1465, 1540, 1620].forEach(function (x) {
      line(x, 1283, x, 1287, LINE, 1);
    });
    rect(720, 1283, 115, 22, "#000080");
    text(722, 1296, "2023/09/15/五", "#c8c8ff", 17);
    text(1746, 1297, "日线", "#c0c0c0", 18, "middle");
    line(0, 1305, 1788, 1305, LINE, 2);
    document.getElementById("chart").innerHTML = out.join("");

    // quote panel rows
    var html = "";
    [["买一","12.38","52448"],["买二","12.37","233"],["买三","12.36","216"],["买四","12.35","117"],["买五","12.34","260"]].forEach(function (r) {
      html += '<div class="q-row d-flex align-items-center"><div class="q-cell d-flex justify-content-between align-items-center"><span class="lbl">' + r[0] + '</span><span class="num c-red">' + r[1] + '</span></div><div class="q-cell2 text-end num c-olive">' + r[2] + "</div></div>";
    });
    document.getElementById("buyRows").innerHTML = html;

    html = "";
    [["净流入额",14,"-5506万","-8%"],["大宗流入",14,"-5459万","-7%"],["5日净流入额",36,"-1.38亿","-6%"],["5日大宗流入",4,"-1950万","-1%"]].forEach(function (r) {
      html += '<div class="q-row d-flex align-items-center"><span class="lbl flow-lbl">' + r[0] + '</span><span class="flow-bar"><div class="flow-fill" style="width:' + r[1] + 'px"></div></span><span class="flow-val num c-green text-end">' + r[2] + '</span><span class="flow-pct num c-green text-end">' + r[3] + "</span></div>";
    });
    document.getElementById("flowRows").innerHTML = html;

    html = "";
    [["14:54",25,1],["14:54",3,1],["14:54",1,1],["14:54",23,1],["14:54",30,1],["14:54",2,1],["14:54",1,1],["14:54",20,1],["14:54",7,1],["14:55",3,2],["14:55",17,3],["14:55",3,1],["14:55",5,1],["14:55",1,1],["14:56",9,2],["14:56",10,1],["14:56",2,1],["14:56",30,2],["14:56",78,1],["14:56",5,2],["15:00",455,34]].forEach(function (r) {
      html += '<div class="trade-row d-flex align-items-center num"><span class="tr-time">' + r[0] + '</span><span class="tr-price c-red text-end">12.38</span><span class="tr-vol c-olive text-end">' + r[1] + '</span><span class="tr-side c-green">' + (r[0] === "15:00" ? "" : "S") + '</span><span class="tr-num text-end">' + r[2] + "</span></div>";
    });
    document.getElementById("tradeRows").innerHTML = html;
  </script>
  <script src="https://cdn.jsdelivr.net/npm/bootstrap@5.3.0/dist/js/bootstrap.bundle.min.js"></script>
</body>
</html>
